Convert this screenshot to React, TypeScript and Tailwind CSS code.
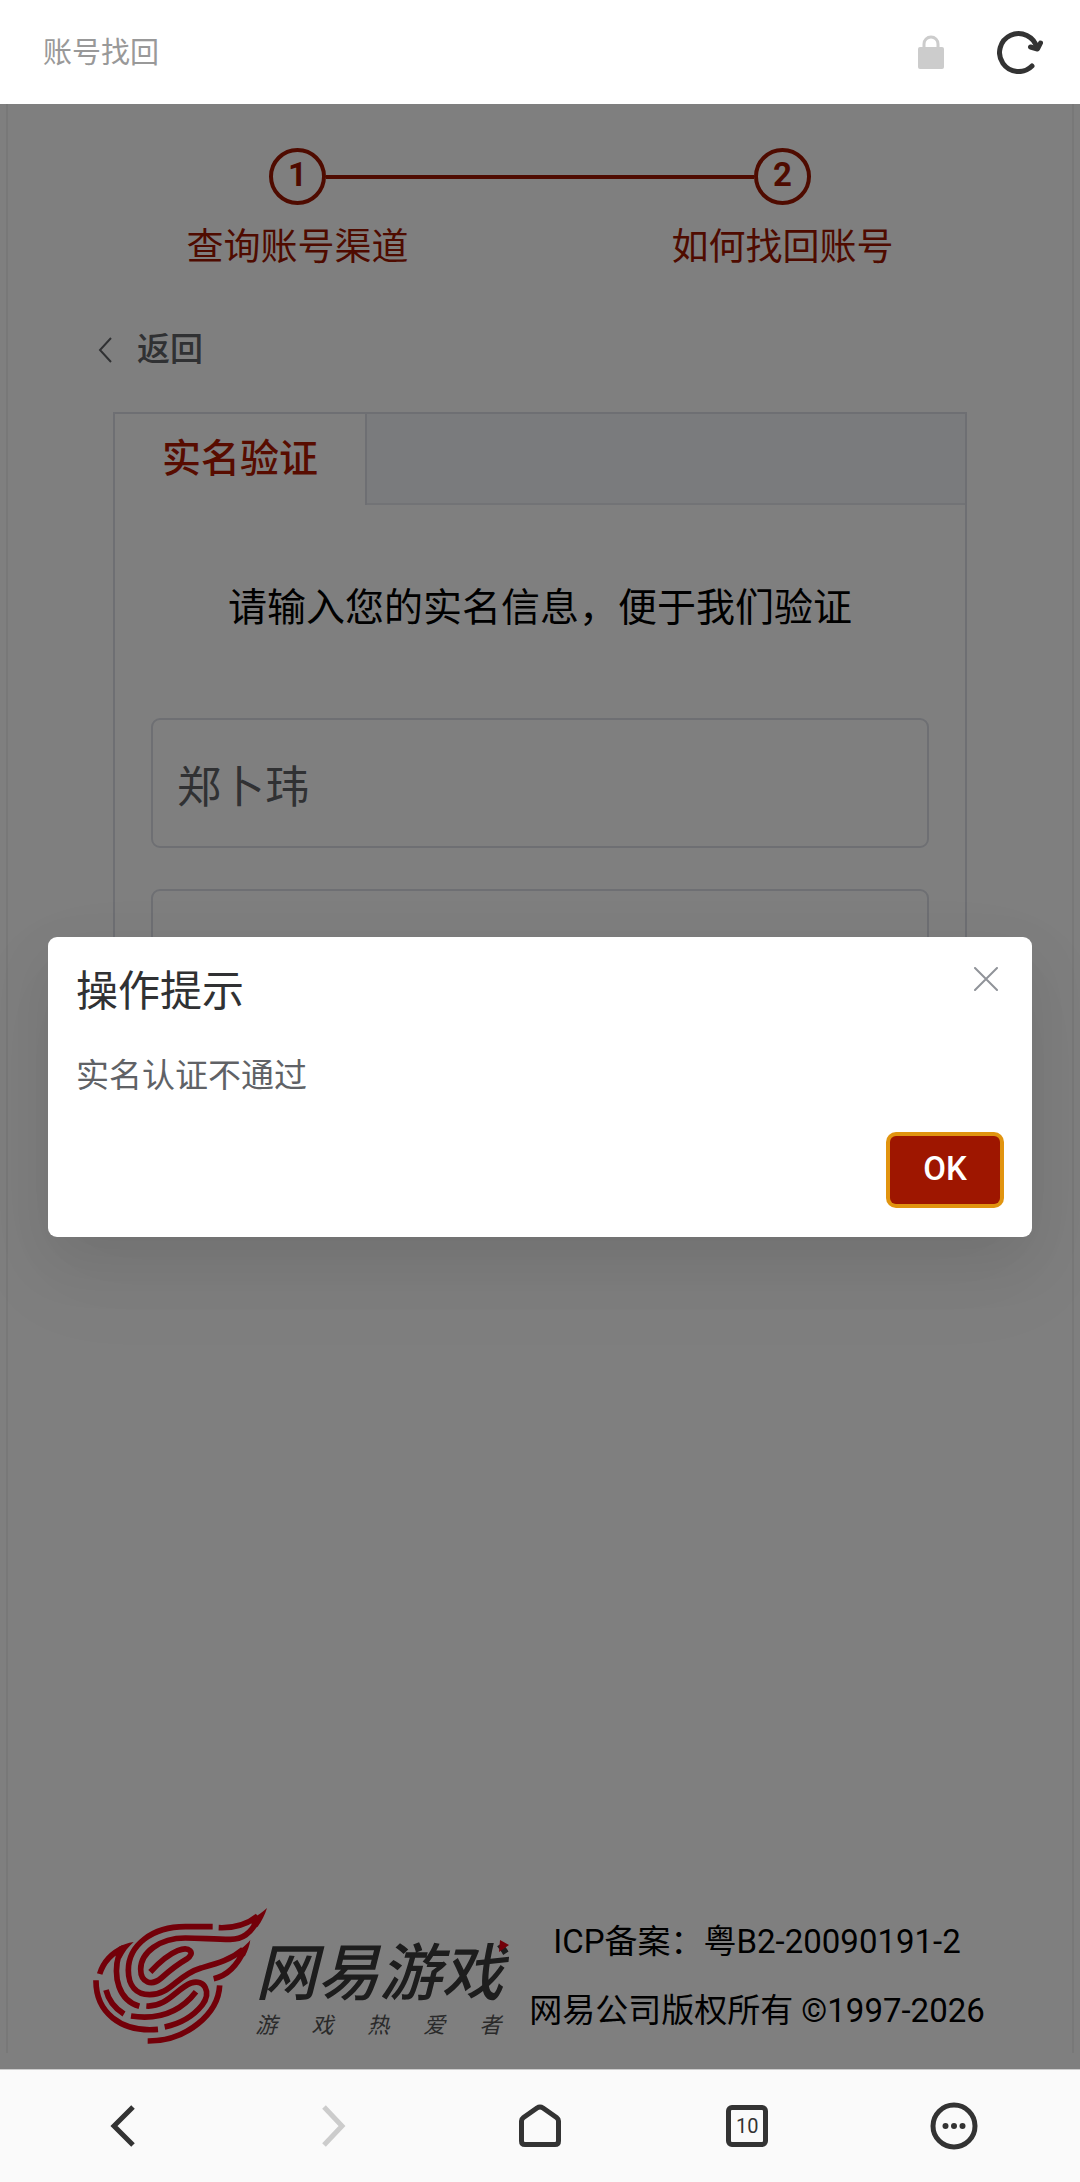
import { useState } from 'react'
import type { ReactNode } from 'react'

const steps = ['查询账号渠道', '如何找回账号']

function FlameLogo() {
  return (
    <svg viewBox="68 88 522 408" className="h-[136px] w-[174px] shrink-0" fill="none" stroke="#e60012" strokeWidth="17" aria-hidden="true">
      <path d="M427 144H345C245 144 174 200 174 275C174 322 198 348 238 348C302 348 318 290 392 268C442 254 480 244 518 212" />
      <path d="M430 300C474 290 504 254 522 212" />
      <path d="M445 147C496 149 530 138 562 112M562 124C540 166 516 182 480 182C430 182 390 178 345 178C268 178 211 222 211 272C211 312 244 323 273 298C298 276 320 258 348 242C378 222 357 202 322 216C288 230 262 256 240 280" />
      <path d="M590 88C574 102 558 114 540 124L548 150L562 144C574 128 584 108 590 88Z" fill="#e60012" stroke="none" />
      <path d="M540 184C524 202 512 212 496 220L504 240L524 232C532 216 538 200 540 184Z" fill="#e60012" stroke="none" />
      <path d="M88 286C98 254 118 226 160 207M146 226C126 296 146 366 207 383" />
      <path d="M190 190C172 193 158 198 146 204L138 226L152 240C162 220 174 204 190 190Z" fill="#e60012" stroke="none" />
      <path d="M77 305C76 400 150 462 263 452" />
      <path d="M107 334C115 367 135 390 161 406" />
      <path d="M228 382C290 386 318 330 362 313C402 300 425 340 395 380C370 411 332 435 283 445" />
      <path d="M182 412C262 424 330 400 377 339" />
      <path d="M448 320C444 404 350 488 232 487" />
    </svg>
  )
}

function Step({ index, label }: { index: number; label: string }) {
  const line = 'h-1 flex-1 bg-[#9e1600]'
  return (
    <li className="flex flex-1 flex-col items-center text-[#9e1600]">
      <div className="flex w-full items-center">
        <span className={index > 0 ? line : 'flex-1'} />
        <span className="flex size-[57px] items-center justify-center rounded-full border-4 border-[#9e1600] pb-1 text-[33px] leading-none font-bold">{index + 1}</span>
        <span className={index < steps.length - 1 ? line : 'flex-1'} />
      </div>
      <span className="mt-4 text-[37px] leading-[54px]">{label}</span>
    </li>
  )
}

function NavButton({ label, disabled, children }: { label: string; disabled?: boolean; children: ReactNode }) {
  return (
    <button type="button" aria-label={label} disabled={disabled} className="flex h-full flex-1 items-center justify-center text-[#333] disabled:text-[#ccc]">
      {children}
    </button>
  )
}

export default function App() {
  const [open, setOpen] = useState(true)
  const [name, setName] = useState('郑卜玮')
  const [idNumber, setIdNumber] = useState('')

  const field = 'block h-[130px] w-full rounded-[9px] border-2 border-[#dcdfe6] bg-white px-6 pt-0.5 text-[44px] text-[#606266] outline-none'

  return (
    <div className="flex min-h-screen flex-col bg-white font-['Roboto','Noto_Sans_CJK_SC',sans-serif]">
      <header className="flex h-[104px] shrink-0 items-center bg-white pr-[37px] pl-[43px]">
        <h1 className="flex-1 pt-1 text-[29px] text-[#999]">账号找回</h1>
        <svg viewBox="0 0 26 34" className="mr-[53px] h-[34px] w-[26px]" role="img" aria-label="安全连接">
          <path d="M6 14V9a7 7 0 0 1 14 0v5" fill="none" stroke="#ccc" strokeWidth="3" />
          <rect y="12" width="26" height="22" rx="2" fill="#ccc" />
        </svg>
        <button type="button" aria-label="刷新">
          <svg viewBox="0 0 46 44" className="h-11 w-[46px]" fill="none" stroke="#333" strokeWidth="5" strokeLinecap="round">
            <path d="M35 36A19 19 0 1 1 40 18" />
            <path d="M33.500 17L40.500 19L43.500 13" strokeLinejoin="round" />
          </svg>
        </button>
      </header>

      <main className="relative flex flex-1 flex-col bg-white px-1.5 pb-4">
        <div className="flex flex-1 flex-col border-x-2 border-[#f0f0f0]">
          <ol className="flex px-[47px] pt-11">
            {steps.map((label, i) => (
              <Step key={label} index={i} label={label} />
            ))}
          </ol>

          <button type="button" className="mt-[49px] ml-[90px] flex items-center self-start text-[#606266]">
            <svg viewBox="0 0 14 26" className="mr-[25px] h-[26px] w-3.5" fill="none" stroke="currentColor" strokeWidth="2">
              <path d="M13 1L2 13L13 25" />
            </svg>
            <span className="text-[33px] leading-[52px] font-medium">返回</span>
          </button>

          <section className="mx-[105px] mt-9 border-2 border-[#dcdfe6]">
            <div className="flex h-[91px] bg-[#f5f7fa]" role="tablist">
              <button type="button" role="tab" aria-selected="true" className="border-r-2 border-[#dcdfe6] bg-white px-[47px] text-[39px] font-medium text-[#b01800]">
                实名验证
              </button>
              <div className="flex-1 border-b-2 border-[#e4e7ed]" />
            </div>
            <form className="px-9 pt-[73px] pb-12" onSubmit={(e) => e.preventDefault()}>
              <p className="text-center text-[39px] leading-[60px] text-black">请输入您的实名信息，便于我们验证</p>
              <input aria-label="姓名" value={name} onChange={(e) => setName(e.target.value)} className={`mt-20 ${field}`} />
              <input aria-label="身份证号" value={idNumber} onChange={(e) => setIdNumber(e.target.value)} className={`mt-[41px] ${field}`} />
            </form>
          </section>

          <footer className="mt-auto flex items-center justify-center gap-5 pr-0.5 pb-2">
            <div className="flex w-[416px]">
              <FlameLogo />
              <div className="relative -ml-3 flex flex-1 flex-col pt-7">
                <span className="text-[62px] leading-[76px] font-medium whitespace-nowrap text-[#3a3a3a] italic">网易游戏</span>
                <div className="flex justify-between pr-2 text-[22px] leading-7 text-[#555] italic">
                  {['游', '戏', '热', '爱', '者'].map((ch) => (
                    <span key={ch}>{ch}</span>
                  ))}
                </div>
                <svg viewBox="0 0 10 12" className="absolute top-8 right-0 h-3 w-2.5" aria-hidden="true">
                  <path d="M1 0L10 5L0 12Z" fill="#e60012" />
                </svg>
              </div>
            </div>
            <div className="text-center text-[33px] leading-[69px] whitespace-nowrap text-black">
              <p>ICP备案：粤B2-20090191-2</p>
              <p>网易公司版权所有 ©1997-2026</p>
            </div>
          </footer>
        </div>

        {open && (
          <div className="absolute inset-0 flex items-center justify-center bg-black/50 px-12">
            <div role="dialog" aria-modal="true" aria-labelledby="tip-title" className="w-full rounded-[9px] bg-white px-7 pt-6 pb-[33px] shadow-[0_36px_96px_12px_rgba(0,0,0,0.04),0_24px_60px_rgba(0,0,0,0.08)]">
              <div className="flex items-start justify-between">
                <h2 id="tip-title" className="text-[42px] leading-[62px] text-[#303133]">操作提示</h2>
                <button type="button" aria-label="关闭" onClick={() => setOpen(false)} className="p-1.5">
                  <svg viewBox="0 0 24 24" className="size-6" fill="none" stroke="#909399" strokeWidth="2" strokeLinecap="round">
                    <path d="M1 1L23 23M23 1L1 23" />
                  </svg>
                </button>
              </div>
              <p className="mt-7 text-[33px] leading-[50px] text-[#606266]">实名认证不通过</p>
              <div className="mt-[35px] flex justify-end pr-1">
                <button type="button" onClick={() => setOpen(false)} className="h-[68px] w-[110px] rounded-md bg-[#9e1600] pb-0.5 text-[33px] leading-none font-medium text-white ring-4 ring-[#e1940f]">
                  OK
                </button>
              </div>
            </div>
          </div>
        )}
      </main>

      <nav className="flex h-[113px] shrink-0 items-center border-t border-[#ccc] bg-[#fafafa] px-[22px]">
        <NavButton label="后退">
          <svg viewBox="0 0 48 48" className="size-12" fill="none" stroke="currentColor" strokeWidth="5">
            <path d="M31 5L12 24L31 43" />
          </svg>
        </NavButton>
        <NavButton label="前进" disabled>
          <svg viewBox="0 0 48 48" className="size-12" fill="none" stroke="currentColor" strokeWidth="5">
            <path d="M15 5L33 24L15 43" />
          </svg>
        </NavButton>
        <NavButton label="主页">
          <svg viewBox="0 0 48 48" className="size-12" fill="none" stroke="currentColor" strokeWidth="5" strokeLinejoin="round">
            <path d="M5.500 19Q5.500 17 7.500 15.500L21 6Q24 4 27 6L40.500 15.500Q42.500 17 42.500 19V39Q42.500 42.500 39 42.500H9Q5.500 42.500 5.500 39Z" />
          </svg>
        </NavButton>
        <NavButton label="标签页">
          <span className="flex size-[42px] items-center justify-center rounded-md border-[5px] border-[#333] text-[20px] leading-none">10</span>
        </NavButton>
        <NavButton label="菜单">
          <svg viewBox="0 0 48 48" className="size-12">
            <circle cx="24" cy="24" r="21" fill="none" stroke="currentColor" strokeWidth="5" />
            <circle cx="15.500" cy="24" r="3" fill="currentColor" />
            <circle cx="24" cy="24" r="3" fill="currentColor" />
            <circle cx="32.500" cy="24" r="3" fill="currentColor" />
          </svg>
        </NavButton>
      </nav>
    </div>
  )
}
